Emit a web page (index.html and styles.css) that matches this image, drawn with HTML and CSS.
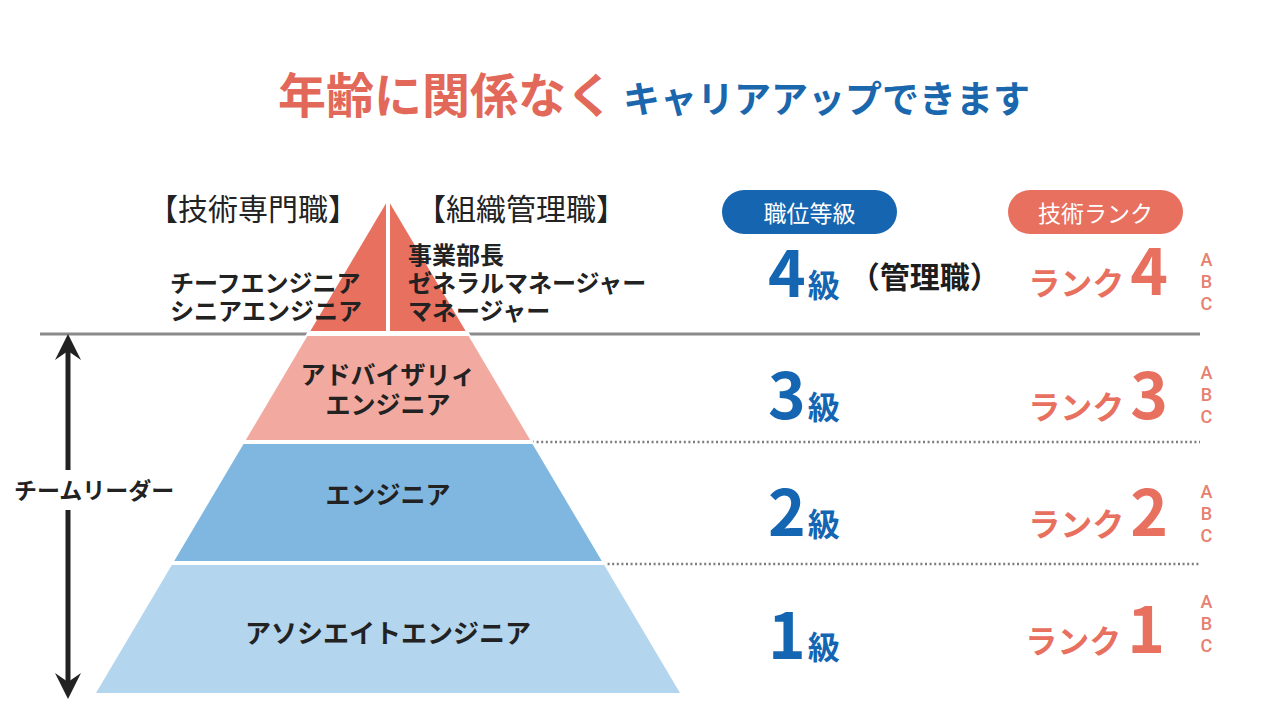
FILE: index.html
```html
<!DOCTYPE html>
<html lang="ja">
<head>
<meta charset="utf-8">
<title>キャリアアップ</title>
<link rel="stylesheet" href="styles.css">
</head>
<body>
<main class="page">
  <h1 class="title"><span class="title-red">年齢に関係なく</span><span class="title-blue">キャリアアップできます</span></h1>
  <section class="chart">
    <svg class="diagram" width="1280" height="540" viewBox="0 180 1280 540" xmlns="http://www.w3.org/2000/svg">
      <line class="rule" x1="40" y1="334" x2="1200" y2="334"/>
      <line class="dots" x1="532" y1="442" x2="1200" y2="442"/>
      <line class="dots" x1="603" y1="564" x2="1200" y2="564"/>
      <polygon class="mask" points="388,196 92,696 684,696"/>
      <polygon class="tier-top" points="388,200 310.4,331 465.6,331"/>
      <line class="divider" x1="388" y1="194" x2="388" y2="333"/>
      <polygon class="tier-pink" points="307.4,336 468.6,336 530.2,440 245.8,440"/>
      <polygon class="tier-blue" points="243.5,444 532.5,444 601.8,561 174.2,561"/>
      <polygon class="tier-light" points="171.8,565 604.2,565 680,693 96,693"/>

      <line class="arrow" x1="68" y1="350" x2="68" y2="470"/>
      <line class="arrow" x1="68" y1="510" x2="68" y2="684"/>
      <path class="arrow-head" d="M68 334 L55 360 L68 351 L81 360 Z"/>
      <path class="arrow-head" d="M68 699 L55 673 L68 682 L81 673 Z"/>

      <text class="cat" x="148" y="220">【技術専門職】</text>
      <text class="cat" x="416" y="220">【組織管理職】</text>

      <text class="pos" x="170" y="292">チーフエンジニア</text>
      <text class="pos" x="170" y="320">シニアエンジニア</text>
      <text class="pos" x="408" y="264">事業部長</text>
      <text class="pos" x="408" y="292">ゼネラルマネージャー</text>
      <text class="pos" x="408" y="320">マネージャー</text>

      <text class="tier-label" x="388" y="384">アドバイザリィ</text>
      <text class="tier-label" x="388" y="414">エンジニア</text>
      <text class="tier-label" x="388" y="504">エンジニア</text>
      <text class="tier-label wide" x="388" y="643">アソシエイトエンジニア</text>

      <text class="leader" x="14" y="499">チームリーダー</text>
    </svg>

    <div class="badge badge-grade">職位等級</div>
    <div class="badge badge-rank">技術ランク</div>

    <div class="grade lv4"><span class="num">4</span><span class="kyu">級</span><span class="note">（管理職）</span></div>
    <div class="rank lv4"><span class="rk">ランク</span>4</div>
    <div class="abc lv4"><span>A</span><span>B</span><span>C</span></div>

    <div class="grade lv3"><span class="num">3</span><span class="kyu">級</span></div>
    <div class="rank lv3"><span class="rk">ランク</span>3</div>
    <div class="abc lv3"><span>A</span><span>B</span><span>C</span></div>

    <div class="grade lv2"><span class="num">2</span><span class="kyu">級</span></div>
    <div class="rank lv2"><span class="rk">ランク</span>2</div>
    <div class="abc lv2"><span>A</span><span>B</span><span>C</span></div>

    <div class="grade lv1"><span class="num">1</span><span class="kyu">級</span></div>
    <div class="rank lv1"><span class="rk">ランク</span>1</div>
    <div class="abc lv1"><span>A</span><span>B</span><span>C</span></div>
  </section>
</main>
</body>
</html>
```

FILE: styles.css
```css
* { box-sizing: border-box; }
html, body { margin: 0; padding: 0; background: #fff; }
body {
  font-family: "Noto Sans CJK JP", "Noto Sans", sans-serif;
  color: #222;
}
.page {
  width: 1280px;
  height: 720px;
  overflow: hidden;
}

/* title */
.title {
  margin: 0;
  height: 180px;
  padding-top: 68px;
  padding-left: 28px;
  display: flex;
  justify-content: center;
  align-items: baseline;
  gap: 9px;
  font-weight: 700;
  line-height: 1;
}
.title-red { color: #e2695a; font-size: 48px; }
.title-blue { color: #1a67ad; font-size: 37px; }

/* chart grid */
.chart {
  display: grid;
  grid-template-columns: 722px 286px 185px 1fr;
  grid-template-rows: 54px 99px 108px 122px 130px 1fr;
  height: 540px;
}
.diagram {
  grid-column: 1 / -1;
  grid-row: 1 / -1;
  display: block;
}
.rule { stroke: #8a8a8a; stroke-width: 3; }
.dots { stroke: #7d7d7d; stroke-width: 2.5; stroke-dasharray: 2 2.6; }
.mask { fill: #fff; }
.tier-top { fill: #e8705f; }
.tier-pink { fill: #f2a9a0; }
.tier-blue { fill: #80b7e1; }
.tier-light { fill: #b3d5ee; }
.divider { stroke: #fff; stroke-width: 4; }
.arrow { stroke: #222; stroke-width: 5; }
.arrow-head { fill: #222; }

.diagram text { font-family: "Noto Sans CJK JP", sans-serif; fill: #222; }
.cat { font-size: 30px; font-weight: 400; }
.pos { font-size: 24px; font-weight: 700; }
.tier-label { font-size: 25px; font-weight: 700; text-anchor: middle; fill: #1f262c; }
.tier-label.wide { font-size: 26px; }
.leader { font-size: 23px; font-weight: 700; }

/* badges */
.badge {
  grid-row: 1;
  align-self: end;
  width: 175px;
  height: 44px;
  border-radius: 22px;
  color: #fff;
  font-size: 23px;
  font-weight: 400;
  display: flex;
  align-items: center;
  justify-content: center;
  position: relative;
  z-index: 1;
}
.badge-grade { grid-column: 2; background: #1565b0; }
.badge-rank { grid-column: 3; background: #e8705f; }

/* level rows */
.grade, .rank, .abc { position: relative; z-index: 1; white-space: nowrap; }
.grade {
  grid-column: 2;
  font-size: 64px;
  line-height: 64px;
  font-weight: 700;
  color: #1466b2;
  padding-left: 46px;
}
.kyu { font-size: 32px; line-height: 32px; margin-left: 2px; }
.note {
  font-size: 30px;
  line-height: 30px;
  color: #1d1d1d;
  margin-left: 10px;
  vertical-align: 9px;
}
.rank {
  grid-column: 3;
  text-align: right;
  padding-right: 25px;
  font-size: 64px;
  line-height: 64px;
  font-weight: 700;
  color: #e8705f;
}
.rk { font-size: 32px; line-height: 32px; margin-right: 6px; }
.abc {
  grid-column: 4;
  width: 26px;
  padding-left: 1px;
  display: flex;
  flex-direction: column;
  align-items: center;
  font-family: Roboto, "Noto Sans", sans-serif;
  font-size: 18px;
  font-weight: 500;
  color: #e8806f;
}
.abc span { display: block; height: 22px; line-height: 22px; }

.lv4 { grid-row: 2; }
.lv3 { grid-row: 3; }
.lv2 { grid-row: 4; }
.lv1 { grid-row: 5; }

.grade.lv4 { padding-top: 3px; }
.rank.lv4 { padding-top: 1px; }
.grade.lv3, .rank.lv3 { padding-top: 26px; }
.grade.lv2, .rank.lv2 { padding-top: 35px; }
.grade.lv1 { padding-top: 36px; }
.rank.lv1 { padding-top: 30px; padding-right: 28px; }

.abc.lv4 { padding-top: 15px; }
.abc.lv3 { padding-top: 29px; }
.abc.lv2 { padding-top: 40px; }
.abc.lv1 { padding-top: 28px; }
```
